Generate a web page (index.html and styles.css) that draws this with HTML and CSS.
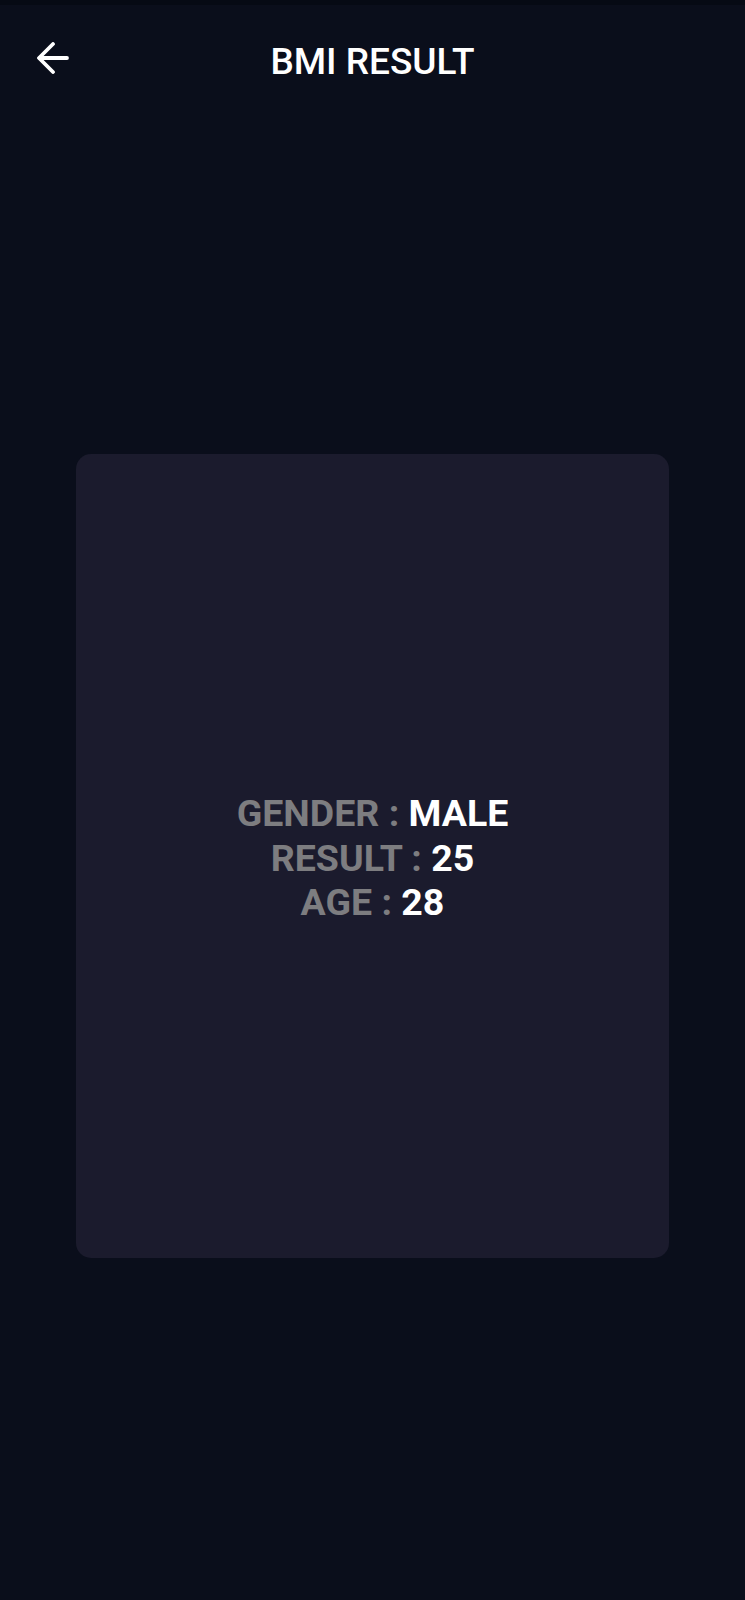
FILE: index.html
```html
<!DOCTYPE html>
<html>
<head>
<meta charset="utf-8">
<link rel="stylesheet" href="styles.css">
</head>
<body>
<div class="status"></div>
<header class="appbar">
  <button class="back" aria-label="Back">
    <svg width="32" height="32" viewBox="0 0 32 32" fill="none" stroke="#ffffff" stroke-width="3.8" stroke-linecap="round" stroke-linejoin="round">
      <path d="M30 16H3"/>
      <path d="M16 2L2 16L16 30"/>
    </svg>
  </button>
  <h1 class="title">BMI RESULT</h1>
</header>
<main class="content">
  <section class="card">
    <p class="row"><span class="label">GENDER : </span><span class="value">MALE</span></p>
    <p class="row"><span class="label">RESULT : </span><span class="value">25</span></p>
    <p class="row"><span class="label">AGE : </span><span class="value">28</span></p>
  </section>
</main>
</body>
</html>
```

FILE: styles.css
```css
html, body {
  margin: 0;
  padding: 0;
  background: #0a0e1b;
  font-family: Roboto, "Liberation Sans", sans-serif;
}
body {
  width: 745px;
  height: 1600px;
  overflow: hidden;
}
.status {
  height: 5px;
  background: #060a14;
}
.appbar {
  position: relative;
  height: 109px;
  display: flex;
  align-items: center;
  justify-content: center;
  margin-top: -5px;
}
.back {
  position: absolute;
  left: 37px;
  top: 42px;
  width: 32px;
  height: 32px;
  padding: 0;
  border: 0;
  background: none;
  display: flex;
}
.title {
  margin: 0;
  color: #ffffff;
  font-size: 37px;
  font-weight: 500;
  letter-spacing: 0;
  line-height: 1;
  padding-top: 13px;
}
.content {
  display: flex;
  justify-content: center;
  padding-top: 345px;
}
.card {
  box-sizing: border-box;
  width: 593px;
  height: 804px;
  padding-top: 4px;
  background: #1b1b2d;
  border-radius: 15px;
  display: flex;
  flex-direction: column;
  justify-content: center;
  align-items: center;
}
.row {
  margin: 0;
  font-size: 37.5px;
  font-weight: 700;
  line-height: 44.5px;
  text-align: center;
}
.label {
  color: #7d7d80;
}
.value {
  color: #ffffff;
}
```
